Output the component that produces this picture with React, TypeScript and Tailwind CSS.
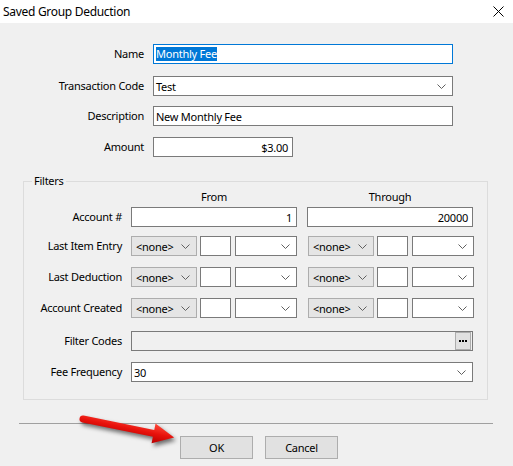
import React from 'react';

const Chevron: React.FC = () => (
  <svg width="9" height="5" viewBox="0 0 9 5" className="shrink-0">
    <path d="M0.5 0.5 L4.5 4.5 L8.5 0.5" fill="none" stroke="#606060" strokeWidth="1" />
  </svg>
);

const TextBox: React.FC<{ value?: string; className?: string; right?: boolean }> = ({ value = '', className = '', right }) => (
  <div
    className={`h-[20px] border border-[#7a7a7a] bg-white px-[2px] flex items-center leading-none ${right ? 'justify-end pr-[4px]' : ''} ${className}`}
  >
    {value}
  </div>
);

const Combo: React.FC<{ value?: string; className?: string }> = ({ value = '', className = '' }) => (
  <div className={`h-[20px] border border-[#7a7a7a] bg-white pl-[2px] pr-[6px] flex items-center justify-between leading-none ${className}`}>
    <span>{value}</span>
    <Chevron />
  </div>
);

const NoneCombo: React.FC = () => (
  <div className="h-[20px] w-[66px] border border-[#adadad] bg-[#e5e5e5] pl-[4px] pr-[6px] flex items-center justify-between leading-none">
    <span>&lt;none&gt;</span>
    <Chevron />
  </div>
);

// one "from" or "through" half of a date filter row
const DateRange: React.FC = () => (
  <div className="flex items-center">
    <NoneCombo />
    <TextBox className="w-[31px] ml-[3px]" />
    <Combo className="w-[62px] ml-[4px]" />
  </div>
);

const FilterRow: React.FC<{ label: string; className?: string; children: React.ReactNode }> = ({ label, className = '', children }) => (
  <div className={`flex items-center ${className}`}>
    <div className="w-[98px] text-right">{label}</div>
    <div className="ml-[9px] flex items-center">{children}</div>
  </div>
);

const App: React.FC = () => {
  return (
    <div
      className="relative w-[513px] h-[466px] bg-[#f0f0f0] text-black text-[11px] tracking-[-0.25px] overflow-hidden"
      style={{ fontFamily: '"Noto Sans", sans-serif' }}
    >
      {/* title bar */}
      <div className="h-[23px] bg-white flex items-center justify-between pl-[3px] pr-[9px] text-[12px] tracking-[-0.3px]">
        <span>Saved Group Deduction</span>
        <svg width="11" height="11" viewBox="0 0 11 11">
          <path d="M0.5 0.5 L10.5 10.5 M10.5 0.5 L0.5 10.5" stroke="#000" strokeWidth="1" />
        </svg>
      </div>

      {/* main fields */}
      <div className="pt-[21px]">
        <div className="flex items-center">
          <div className="w-[144px] text-right">Name</div>
          <div className="ml-[9px] w-[300px] h-[20px] border border-[#0078d7] bg-white px-[2px] flex items-center">
            <span className="bg-[#0078d7] text-white leading-[14px]">Monthly Fee</span>
          </div>
        </div>
        <div className="flex items-center mt-[12px]">
          <div className="w-[144px] text-right">Transaction Code</div>
          <Combo value="Test" className="ml-[9px] w-[300px]" />
        </div>
        <div className="flex items-center mt-[10px]">
          <div className="w-[144px] text-right">Description</div>
          <TextBox value="New Monthly Fee" className="ml-[9px] w-[300px]" />
        </div>
        <div className="flex items-center mt-[11px]">
          <div className="w-[144px] text-right">Amount</div>
          <TextBox value="$3.00" right className="ml-[9px] w-[140px]" />
        </div>
      </div>

      {/* filters group */}
      <div className="relative ml-[23px] mt-[24px] w-[465px] border border-[#dcdcdc] pt-[7px] pb-[17px]">
        <span className="absolute -top-[9px] left-[8px] px-[2px] bg-[#f0f0f0]">Filters</span>

        <div className="flex h-[16px] items-center">
          <div className="w-[107px]" />
          <div className="w-[166px] text-center">From</div>
          <div className="w-[10px]" />
          <div className="w-[166px] text-center">Through</div>
        </div>

        <FilterRow label="Account #" className="mt-[2px]">
          <TextBox value="1" right className="w-[166px]" />
          <TextBox value="20000" right className="w-[166px] ml-[10px]" />
        </FilterRow>

        <FilterRow label="Last Item Entry" className="mt-[9px]">
          <DateRange />
          <div className="w-[11px]" />
          <DateRange />
        </FilterRow>

        <FilterRow label="Last Deduction" className="mt-[11px]">
          <DateRange />
          <div className="w-[11px]" />
          <DateRange />
        </FilterRow>

        <FilterRow label="Account Created" className="mt-[11px]">
          <DateRange />
          <div className="w-[11px]" />
          <DateRange />
        </FilterRow>

        <FilterRow label="Filter Codes" className="mt-[13px]">
          <div className="w-[342px] h-[20px] border border-[#7a7a7a] bg-[#f0f0f0] flex items-center justify-end pr-[1px]">
            <div className="w-[16px] h-[18px] border border-[#adadad] bg-[#e1e1e1] flex items-center justify-center">
              <svg width="8" height="2" viewBox="0 0 8 2">
                <rect x="0" y="0" width="2" height="2" fill="#000" />
                <rect x="3" y="0" width="2" height="2" fill="#000" />
                <rect x="6" y="0" width="2" height="2" fill="#000" />
              </svg>
            </div>
          </div>
        </FilterRow>

        <FilterRow label="Fee Frequency" className="mt-[11px]">
          <Combo value="30" className="w-[342px]" />
        </FilterRow>
      </div>

      {/* footer */}
      <div className="ml-[19px] mt-[23px] w-[474px] h-px bg-[#a0a0a0]" />
      <div className="flex ml-[180px] mt-[12px] gap-[12px]">
        <button className="w-[73px] h-[23px] border border-[#adadad] bg-[#e1e1e1] leading-none">OK</button>
        <button className="w-[73px] h-[23px] border border-[#adadad] bg-[#e1e1e1] leading-none">Cancel</button>
      </div>

      {/* callout arrow over the OK button */}
      <svg
        className="absolute left-0 top-0 pointer-events-none drop-shadow-[2px_3px_2px_rgba(0,0,0,0.55)]"
        width="513"
        height="466"
        viewBox="0 0 513 466"
      >
        <defs>
          <linearGradient id="redFill" x1="0" y1="0" x2="0" y2="1">
            <stop offset="0" stopColor="#ff4a3a" />
            <stop offset="0.5" stopColor="#e8120c" />
            <stop offset="1" stopColor="#b80000" />
          </linearGradient>
        </defs>
        <g transform="translate(83 419) rotate(11.5)">
          <path d="M0 -3.5 L72 -3.5 L72 -10 L93 0 L72 10 L72 3.5 L0 3.5 A3.5 3.5 0 0 1 0 -3.5 Z" fill="url(#redFill)" />
        </g>
      </svg>
    </div>
  );
};

export default App;
